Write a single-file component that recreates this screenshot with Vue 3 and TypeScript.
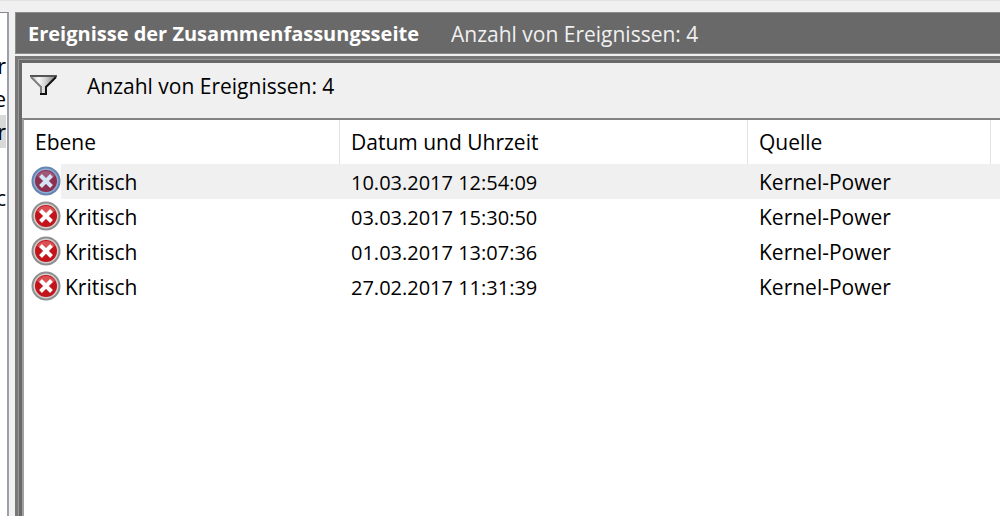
<script setup lang="ts">
interface EventEntry {
  level: string
  date: string
  source: string
  selected: boolean
}

interface TreeEntry {
  label: string
  active: boolean
}

const events: EventEntry[] = [
  { level: 'Kritisch', date: '10.03.2017 12:54:09', source: 'Kernel-Power', selected: true },
  { level: 'Kritisch', date: '03.03.2017 15:30:50', source: 'Kernel-Power', selected: false },
  { level: 'Kritisch', date: '01.03.2017 13:07:36', source: 'Kernel-Power', selected: false },
  { level: 'Kritisch', date: '27.02.2017 11:31:39', source: 'Kernel-Power', selected: false },
]

const tree: TreeEntry[] = [
  { label: 'r', active: false },
  { label: 'e', active: false },
  { label: 'r', active: true },
  { label: '', active: false },
  { label: 'c', active: false },
]
</script>

<template>
  <div class="window">
    <aside class="tree">
      <ul>
        <li v-for="(item, i) in tree" :key="i" :class="{ active: item.active }">{{ item.label }}</li>
      </ul>
    </aside>
    <main class="pane">
      <header class="title">
        <h1>Ereignisse der Zusammenfassungsseite</h1>
        <span>Anzahl von Ereignissen: {{ events.length }}</span>
      </header>
      <section class="frame">
        <div class="filter">
          <svg width="30" height="26" viewBox="0 0 30 26" aria-hidden="true">
            <defs>
              <linearGradient id="funnel" x1="0" x2="1">
                <stop offset="0" stop-color="#b8b8b8" />
                <stop offset="0.3" stop-color="#f8f8f8" />
                <stop offset="0.6" stop-color="#cfcfcf" />
                <stop offset="1" stop-color="#777777" />
              </linearGradient>
            </defs>
            <path d="M2 2H27L17 12V20H12V12Z" fill="url(#funnel)" />
            <path d="M1 2H28" stroke="#555555" stroke-width="2" />
            <path d="M2 3L12 13V20" fill="none" stroke="#808080" stroke-width="2" />
            <path d="M27 3L17 13V20H11" fill="none" stroke="#111111" stroke-width="2" />
          </svg>
          <span>Anzahl von Ereignissen: {{ events.length }}</span>
        </div>
        <div class="list">
          <table>
            <colgroup>
              <col class="c-level" />
              <col class="c-date" />
              <col class="c-source" />
              <col />
            </colgroup>
            <thead>
              <tr>
                <th scope="col">Ebene</th>
                <th scope="col">Datum und Uhrzeit</th>
                <th scope="col">Quelle</th>
                <td></td>
              </tr>
            </thead>
            <tbody>
              <tr v-for="event in events" :key="event.date" :class="{ selected: event.selected }">
                <td class="level">
                  <div>
                    <svg width="30" height="30" viewBox="0 0 30 30" aria-hidden="true">
                      <circle class="rim" cx="15" cy="15" r="14.5" />
                      <circle class="ring" cx="15" cy="15" r="12.5" />
                      <circle class="disc" cx="15" cy="15" r="11" />
                      <path class="shine" d="M6 10A10.5 10.5 0 0 1 24 10L15 15Z" />
                      <path class="cross" d="M9.5 9.5L20.5 20.5M20.5 9.5L9.5 20.5" />
                    </svg>
                    <span>{{ event.level }}</span>
                  </div>
                </td>
                <td class="date">{{ event.date }}</td>
                <td>{{ event.source }}</td>
                <td></td>
              </tr>
            </tbody>
          </table>
        </div>
      </section>
    </main>
  </div>
</template>

<style>
html,
body {
  margin: 0;
  background: #f0f0f0;
}
</style>

<style scoped>
.window {
  box-sizing: border-box;
  display: flex;
  gap: 6px;
  min-height: 100vh;
  padding-top: 11px;
  border-top: 1px solid #e2e2e2;
  background: #f0f0f0;
  color: #000000;
  font-family: "Open Sans", "Noto Sans", sans-serif;
  font-size: 21px;
  line-height: 33px;
  white-space: nowrap;
}

.tree {
  box-sizing: border-box;
  flex: 0 0 9px;
  border-top: 1px solid #828790;
  border-right: 2px solid #9a9fa9;
  background: #ffffff;
  overflow: hidden;
}

.tree ul {
  width: 6px;
  margin: 0;
  padding: 36px 0 0;
  list-style: none;
  overflow: hidden;
}

.tree li {
  display: flex;
  justify-content: flex-end;
  height: 33px;
  line-height: 35px;
}

.tree .active {
  background: #d9d9d9;
}

.pane {
  display: flex;
  flex: 1;
  flex-direction: column;
  gap: 2px;
  min-width: 0;
}

.title {
  display: flex;
  gap: 32px;
  box-sizing: border-box;
  height: 42px;
  padding-left: 12px;
  border: 1px solid #8c8c8c;
  border-right: 0;
  background: #696969;
  color: #f0f0f0;
  line-height: 42px;
}

.title h1 {
  margin: 0;
  color: #ffffff;
  font-size: 20px;
  font-weight: 700;
  line-height: 42px;
}

.frame {
  display: flex;
  flex: 1;
  flex-direction: column;
  padding: 4px 0 0 4px;
  border: 3px solid #787878;
  border-right: 0;
  border-bottom: 0;
  background: #696969;
  box-shadow: inset 1px 1px 0 #989898;
}

.filter {
  display: flex;
  align-items: center;
  gap: 28px;
  box-sizing: border-box;
  height: 55px;
  padding: 0 0 8px 7px;
  background: #f0f0f0;
}

.list {
  flex: 1;
  border-top: 2px solid #828282;
  border-left: 2px solid #a0a0a0;
  background: #ffffff;
}

table {
  width: 100%;
  border-collapse: separate;
  border-spacing: 0;
  table-layout: fixed;
}

.c-level {
  width: 316px;
}

.c-date {
  width: 408px;
}

.c-source {
  width: 243px;
}

th,
td {
  box-sizing: border-box;
  height: 35px;
  padding: 2px 0 0 11px;
  font-weight: 400;
  text-align: left;
}

th {
  height: 44px;
  padding-top: 0;
  border-right: 1px solid #e2e2e2;
}

.level {
  padding: 0 0 0 7px;
}

.level div {
  display: flex;
  align-items: center;
  gap: 4px;
  height: 35px;
}

.level svg {
  margin-bottom: 2px;
}

.level span {
  line-height: 33px;
  padding-top: 2px;
}

.date {
  font-size: 20px;
}

.selected td {
  background: #f0f0f0;
}

.selected .level {
  background: linear-gradient(to right, #ffffff 37px, #f0f0f0 37px);
}

.rim {
  fill: #8f8f8f;
}

.ring {
  fill: #d0d0d0;
}

.disc {
  fill: #c3141b;
}

.shine {
  fill: #dc5054;
}

.cross {
  fill: none;
  stroke: #ffffff;
  stroke-width: 4;
}

.selected .rim {
  fill: #6685b3;
}

.selected .ring {
  fill: #8fafd6;
}

.selected .disc {
  fill: #8c3050;
}

.selected .shine {
  fill: #a0587a;
}

.selected .cross {
  stroke: #d5e4f5;
}
</style>
